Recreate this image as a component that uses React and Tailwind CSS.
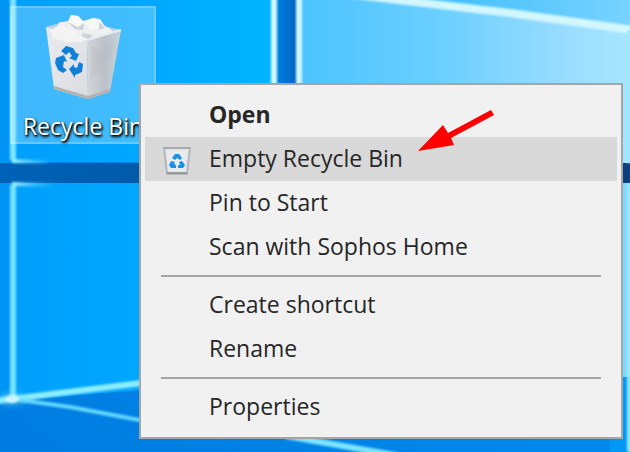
import React from "react";

function Wallpaper() {
  return (
    <svg
      className="absolute inset-0 h-full w-full"
      viewBox="0 0 630 452"
      preserveAspectRatio="none"
      aria-hidden="true"
    >
      <defs>
        <linearGradient id="pane" x1="0" x2="1">
          <stop offset="0" stopColor="#009ffb" />
          <stop offset="0.5" stopColor="#00a8ff" />
          <stop offset="1" stopColor="#00b4ff" />
        </linearGradient>
        <linearGradient id="paneRight" x1="0" x2="1">
          <stop offset="0" stopColor="#4cc4ff" />
          <stop offset="0.4" stopColor="#68ceff" />
          <stop offset="0.8" stopColor="#98dcff" />
          <stop offset="1" stopColor="#a8e6ff" />
        </linearGradient>
        <linearGradient id="sky" x1="0" x2="1">
          <stop offset="0" stopColor="#20aaf4" />
          <stop offset="0.5" stopColor="#48c2fb" />
          <stop offset="1" stopColor="#78d2ff" />
        </linearGradient>
        <linearGradient id="bar" x1="0" x2="1">
          <stop offset="0" stopColor="#0062b8" />
          <stop offset="0.3" stopColor="#0058a4" />
          <stop offset="1" stopColor="#0c3d7c" />
        </linearGradient>
        <linearGradient id="post" x1="0" x2="1">
          <stop offset="0" stopColor="#0080e0" />
          <stop offset="1" stopColor="#0062c0" />
        </linearGradient>
        <linearGradient id="floor" x1="0" y1="1" x2="1" y2="0">
          <stop offset="0" stopColor="#007be0" />
          <stop offset="1" stopColor="#0098f6" />
        </linearGradient>
        <linearGradient id="fade" gradientUnits="userSpaceOnUse" x1="12" x2="60">
          <stop offset="0" stopColor="#9cf2ff" />
          <stop offset="1" stopColor="#30b8ff" stopOpacity="0" />
        </linearGradient>
        <filter id="glow" x="-20%" y="-20%" width="140%" height="140%">
          <feGaussianBlur stdDeviation="1" />
        </filter>
        <filter id="haze" x="-100%" y="-100%" width="300%" height="300%">
          <feGaussianBlur stdDeviation="3" />
        </filter>
      </defs>
      <rect width="630" height="452" fill="url(#floor)" />
      <rect width="13" height="398" fill="#0094f4" />
      <rect x="12" width="263" height="162" fill="url(#pane)" />
      <path d="M12 183H275V380L12 400Z" fill="url(#pane)" />
      <rect x="276" width="22" height="165" fill="url(#post)" />
      <rect x="299" width="331" height="165" fill="url(#sky)" />
      <path d="M299 -8L380 0L630 30V165H299Z" fill="url(#paneRight)" />
      <rect x="610" y="180" width="20" height="197" fill="#7ed8ff" />
      <rect x="610" y="377" width="20" height="75" fill="#0098f6" />
      <rect y="163" width="630" height="20" fill="url(#bar)" />
      <g filter="url(#glow)" fill="none">
        <path d="M13 -5V160" stroke="#7ce4ff" strokeWidth="6" />
        <path d="M13 185V398" stroke="#74e2ff" strokeWidth="6" />
        <path d="M12 161L48 162M12 184L58 185" stroke="url(#fade)" strokeWidth="4" />
        <path d="M274 -5V100M299 -5V100" stroke="#d0f8ff" strokeWidth="6" />
        <path d="M340 -7L390 -1L510 13L634 30" stroke="#d2f7ff" strokeWidth="8" />
        <path d="M629 30V163M629 184V452" stroke="#9ce8ff" strokeWidth="4" />
        <path d="M-4 401L12 399L60 393L150 382" stroke="#8ceeff" strokeWidth="6" />
        <path d="M12 399L70 407L150 422" stroke="#64d8ff" strokeWidth="4" />
        <path d="M286 436L400 456" stroke="#7ce4ff" strokeWidth="6" />
        <ellipse cx="12" cy="399" rx="7" ry="4" fill="#ffffff" />
      </g>
      <ellipse cx="12" cy="399" rx="14" ry="6" fill="#7be8ff" opacity="0.45" filter="url(#haze)" />
    </svg>
  );
}

function RecycleMark() {
  return (
    <g fill="#0f80d7">
      <path d="M6 5L11 0L18 2L21 7L24 8L21 15L14 12L17 10L14 6L11 9Z" />
      <path d="M1 12L9 9L12 16L9 15L8 21L12 24L8 27L3 24L0 17Z" />
      <path d="M14 23L19 18V21L22 22L24 16L28 18L27 26L20 29V32Z" />
    </g>
  );
}

function FullBin() {
  return (
    <svg className="mt-1 h-[90px] w-[80px]" viewBox="0 0 80 90" aria-hidden="true">
      <defs>
        <linearGradient id="binLeft" x1="0" y1="0" x2="1" y2="1">
          <stop offset="0" stopColor="#e9ebee" />
          <stop offset="1" stopColor="#dcdde0" />
        </linearGradient>
        <linearGradient id="binRight" x1="0" x2="1">
          <stop offset="0" stopColor="#d5d7da" />
          <stop offset="0.5" stopColor="#bbc1c7" />
          <stop offset="1" stopColor="#c9d3dc" />
        </linearGradient>
      </defs>
      <path d="M3 15L30 7L78 18L46 30Z" fill="#b9d3e6" />
      <path d="M9 22L17 10L25 10L28 3L35 4L40 9L50 6L57 7L61 13L70 19L62 25L46 29Z" fill="#eeeff1" />
      <path d="M25 10L28 3L35 4L42 11L35 15Z" fill="#fafafa" />
      <path d="M41 11L50 6L59 9L56 17L48 19Z" fill="#f7f7f8" />
      <path d="M25 10L35 15L41 11L40 18L32 17ZM40 21L50 23L46 27L38 25ZM56 10L62 16L56 18Z" fill="#cfd2d6" />
      <path d="M3 15L44 28L45 87L11 77Z" fill="url(#binLeft)" />
      <path d="M44 28L78 18L67 80L45 87Z" fill="url(#binRight)" />
      <path d="M47 34L59 38L71 27L68 45L58 53L65 66L54 60L47 71Z" fill="#aeb5bb" opacity="0.25" />
      <path d="M7 18L18 12L32 20L44 27L38 30L22 30L10 26Z" fill="#f4f4f5" opacity="0.9" />
      <path d="M11 77L45 87L67 80V77L45 84L11 74Z" fill="#b4b1b0" />
      <path d="M44 28L78 18" fill="none" stroke="#e3edf4" strokeWidth="2" />
      <g transform="translate(12 34)">
        <RecycleMark />
      </g>
    </svg>
  );
}

function SmallBin() {
  return (
    <svg className="mt-1 h-7 w-7" viewBox="0 0 28 28" aria-hidden="true">
      <path d="M1 1H27L24 27H4Z" fill="#e2e5e8" stroke="#b4b7ba" strokeWidth="2" />
      <path d="M4 4H24L22 24H6Z" fill="#e8ebee" />
      <path d="M0 1H28" stroke="#a8abae" strokeWidth="2" />
      <path d="M4 26H24" stroke="#989b9e" strokeWidth="2" />
      <g fill="#1a90e6">
        <path d="M9 11L12 7H16L19 11L17 13L14 11L12 13Z" />
        <path d="M8 14L12 15L11 17L13 18V21H8L6 18Z" />
        <path d="M19 14L22 18L20 21H15V18H17L16 15Z" />
      </g>
    </svg>
  );
}

function MenuItem({ label, icon, bold, active }) {
  return (
    <li role="none">
      <button
        type="button"
        role="menuitem"
        className={
          "flex h-11 w-full items-center text-left hover:bg-[#d9d9d9] " +
          (active ? "bg-[#d9d9d9] " : "") +
          (bold ? "font-bold" : "")
        }
      >
        <span className="flex w-16 shrink-0 justify-center">{icon}</span>
        <span className="pb-0.5 whitespace-nowrap">{label}</span>
      </button>
    </li>
  );
}

function Separator() {
  return (
    <li role="separator" className="mx-4 py-1.5">
      <div className="h-0.5 bg-[#a5a5a5]" />
    </li>
  );
}

function Pointer() {
  return (
    <svg
      className="pointer-events-none absolute top-6 left-[276px] h-[44px] w-[78px]"
      viewBox="0 0 78 44"
      aria-hidden="true"
    >
      <path d="M1 42L26 16L31 24L74 1L77 6L34 29L37 36Z" fill="#ff0000" />
    </svg>
  );
}

export default function App() {
  return (
    <main className="relative min-h-screen overflow-hidden bg-[#0090f0] font-['Open_Sans','Noto_Sans',sans-serif] text-[23px] leading-7">
      <Wallpaper />
      <button
        type="button"
        className="relative mt-1.5 ml-2.5 flex h-[138px] w-[146px] flex-col items-center border-2 border-white/40 bg-white/25 bg-clip-padding"
      >
        <FullBin />
        <span className="mt-2.5 whitespace-nowrap text-white [text-shadow:1px_2px_3px_#000,1px_1px_2px_#000]">
          Recycle Bin
        </span>
      </button>
      <div className="absolute top-[83px] right-[7px] left-[139px] border-2 border-[#a5a5a5] bg-[#f1f1f1] text-[#262626]">
        <ul role="menu" aria-label="Recycle Bin" className="px-1 py-2">
          <MenuItem label="Open" bold />
          <MenuItem label="Empty Recycle Bin" icon={<SmallBin />} active />
          <MenuItem label="Pin to Start" />
          <MenuItem label="Scan with Sophos Home" />
          <Separator />
          <MenuItem label="Create shortcut" />
          <MenuItem label="Rename" />
          <Separator />
          <MenuItem label="Properties" />
        </ul>
        <Pointer />
      </div>
    </main>
  );
}
